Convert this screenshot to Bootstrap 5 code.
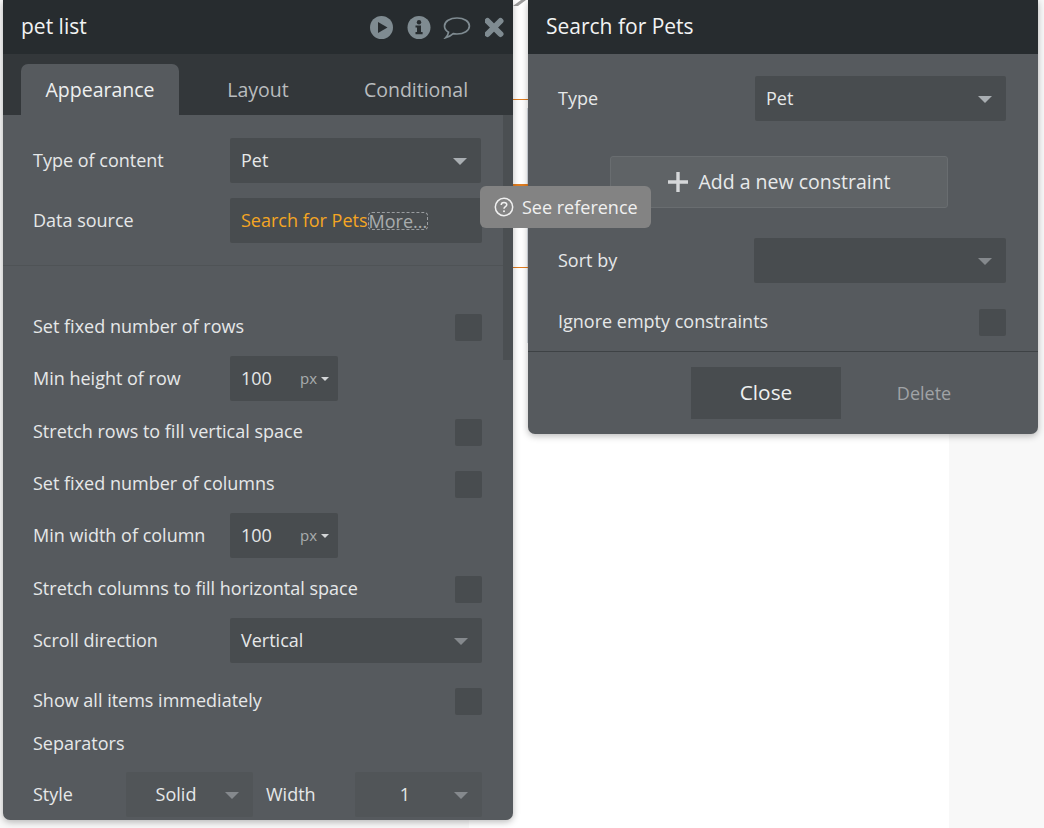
<!DOCTYPE html>
<html lang="en"><head><meta charset="utf-8">
<link href="https://cdn.jsdelivr.net/npm/bootstrap@5.3.0/dist/css/bootstrap.min.css" rel="stylesheet">
<style>
html,body{height:828px;overflow:hidden}
body{background:#f8f8f8;font-family:"Open Sans","Liberation Sans",sans-serif;font-size:18px;color:#e6e8e9;position:relative}
.white-canvas{position:absolute;left:469px;top:0;width:480px;bottom:0;background:#fff}
.wire{position:absolute;left:513px;width:15px;height:1px;background:#e07d20}
.wire-thick{height:2px}
.guide{position:absolute;left:527px;top:108px;width:1px;height:235px;background:#d8dde4}
.corner-mark{position:absolute;left:513px;top:0}
.pane{position:absolute;top:0;width:510px;background:#565a5e;border-radius:0 0 7px 7px;box-shadow:0 2px 7px rgba(0,0,0,.28);overflow:hidden}
.pane-l{left:3px;height:820px}
.pane-r{left:528px;height:434px}
.hd{height:54px;background:#272c2f;color:#f2f3f3;font-size:21px;padding:0 8px 0 18px}
.hd-icons{gap:13px}
.tabs{height:61px;background:#33373a;padding:10px 18px 0}
.tb{height:51px;width:158px;line-height:51px;text-align:center;font-size:19.5px;color:#b9bcbe}
.tb.on{background:#565a5e;color:#eef0f0;border-radius:7px 7px 0 0}
.track{position:absolute;left:500px;top:115px;width:10px;height:245px;background:#4b4f52}
.pbody{padding:0 31px 0 30px}
.pbody-r{padding:0 32px 0 30px}
.line{height:45px}
.line-s{height:27px}
.lift>span{margin-bottom:3px}
.fld{height:45px;background:#484c4f;border-radius:2px;position:relative;padding-left:11px;color:#e6e8e9;flex:none}
.fld-w{width:252px;margin-left:auto}
.fld-t{width:251px}
.fld-t1{width:251px;margin-left:auto;margin-right:1px}
.fld-n{width:108px}
.lbl-n{width:197px}
.fld-soft{width:127px;background:#515558;justify-content:center;padding:0 27px 0 0}
.soft-a{margin-left:auto}
.caret-d{width:0;height:0;border-left:7px solid transparent;border-right:7px solid transparent;border-top:7px solid #a9aeb2;position:absolute;right:14px;top:20px}
.caret-m{border-top-color:#85898d}
.px-unit{position:absolute;right:9px;top:12px;font-size:15px;color:#a9acae;line-height:20px}
.px-unit::after{content:"";display:inline-block;width:0;height:0;border-left:4.5px solid transparent;border-right:4.5px solid transparent;border-top:4.5px solid #d4d6d8;margin-left:4px;vertical-align:3px}
.ck{width:27px;height:27px;background:#484c4f;border-radius:2px;margin-left:auto;flex:none}
.sep{height:1px;background:#4f5356;margin-left:-30px;margin-right:-31px}
.sep-dark{height:1px;background:#3e4245;margin:15px -32px 0 -30px}
.dsrc{color:#f5a623}
.more-tag{color:#a9acae;border:1px dashed #9a9da0;border-radius:4px;line-height:16px;height:18px;width:60px;white-space:nowrap;margin-top:1px}
.add-btn{width:338px;height:52px;margin-left:52px;background:#5f6366;border:1px solid #696d70;border-radius:3px;color:#e8eaeb;font-size:19.5px;padding:0;gap:9px}
.close-btn{width:150px;height:52px;margin-left:133px;background:#484c4f;border:0;border-radius:0;color:#eef0f0;font-size:20.8px;padding:0}
.del-text{width:100px;margin-left:33px;text-align:center;color:#a0a3a6;font-size:18px}
.tip{position:absolute;left:480px;top:186px;width:171px;height:42px;background:#838383;border-radius:6px;color:#f0f0f0;font-size:18px;padding-left:14px;gap:8px;white-space:nowrap}
.mt15{margin-top:15px}.mt16{margin-top:16px}.mt17{margin-top:17px}.mt18{margin-top:18px}.mt22{margin-top:22px}.mt23{margin-top:23px}.mt25{margin-top:25px}.mt26{margin-top:26px}.mt48{margin-top:48px}.mt35{margin-top:35px}.mt30{margin-top:30px}
.sep-title{line-height:24px;margin-bottom:-1px;position:relative;top:-1px}
.lbl-gap{width:93px}
.w-lbl{margin-left:13px;width:89px}
</style></head><body>
<div class="white-canvas"></div>
<div class="guide"></div>
<svg class="corner-mark" width="14" height="6" viewBox="0 0 14 6"><path d="M0 6 L8 0 H13 L5 6Z" fill="#9b9b9b"/></svg>
<div class="wire" style="top:99px"></div><div class="wire wire-thick" style="top:184px"></div><div class="wire" style="top:267px"></div>

<div class="pane pane-l">
 <div class="hd d-flex align-items-center"><span>pet list</span>
  <div class="hd-icons d-flex align-items-center ms-auto">
   <svg width="24" height="24" viewBox="0 0 24 24"><circle cx="11.5" cy="12.5" r="11.5" fill="#7f8b91"/><path d="M8 7 L17.5 12.5 L8 18Z" fill="#272c2f"/></svg>
   <svg width="24" height="24" viewBox="0 0 24 24"><circle cx="12" cy="12.5" r="11.5" fill="#7f8b91"/><circle cx="12" cy="7.2" r="2.2" fill="#272c2f"/><path d="M8.5 10.4 H14 V17 H15.6 V19.2 H8.5 V17 H10 V12.6 H8.5Z" fill="#272c2f"/></svg>
   <svg width="28" height="24" viewBox="0 0 28 24" style="margin-left:-1px"><path d="M14 3 C21 3 26.4 6.5 26.4 11 C26.4 15.5 21 19 14 19 C12.6 19 11.4 18.9 10.2 18.6 C8 20.6 5.6 22 2.6 22.8 C4.2 21 5.2 19.2 5.5 17.3 C3 15.8 1.5 13.6 1.5 11 C1.5 6.5 7 3 14 3Z" fill="none" stroke="#7f8b91" stroke-width="1.7"/></svg>
   <svg width="20" height="24" viewBox="0 0 20 24" style="margin-left:1px"><path d="M2.5 6 L15.5 19 M15.5 6 L2.5 19" stroke="#7f8b91" stroke-width="6" stroke-linecap="round" fill="none"/></svg>
  </div>
 </div>
 <div class="tabs d-flex"><div class="tb on">Appearance</div><div class="tb">Layout</div><div class="tb">Conditional</div></div>
 <div class="track"></div>
 <div class="pbody">
  <div class="line d-flex align-items-center mt23"><span>Type of content</span><div class="fld fld-t1 d-flex align-items-center">Pet<i class="caret-d"></i></div></div>
  <div class="line d-flex align-items-center mt15"><span>Data source</span><div class="fld fld-w d-flex align-items-center"><span class="dsrc">Search for Pets</span><span class="more-tag">More...</span></div></div>
  <div class="sep mt22"></div>
  <div class="line-s lift d-flex align-items-center mt48"><span>Set fixed number of rows</span><div class="ck"></div></div>
  <div class="line d-flex align-items-center mt15"><span class="lbl-n">Min height of row</span><div class="fld fld-n d-flex align-items-center">100<span class="px-unit">px</span></div></div>
  <div class="line-s lift d-flex align-items-center mt18"><span>Stretch rows to fill vertical space</span><div class="ck"></div></div>
  <div class="line-s lift d-flex align-items-center mt25"><span>Set fixed number of columns</span><div class="ck"></div></div>
  <div class="line d-flex align-items-center mt15"><span class="lbl-n">Min width of column</span><div class="fld fld-n d-flex align-items-center">100<span class="px-unit">px</span></div></div>
  <div class="line-s lift d-flex align-items-center mt18"><span>Stretch columns to fill horizontal space</span><div class="ck"></div></div>
  <div class="line d-flex align-items-center mt15"><span>Scroll direction</span><div class="fld fld-w d-flex align-items-center">Vertical<i class="caret-d caret-m"></i></div></div>
  <div class="line-s lift d-flex align-items-center mt25"><span>Show all items immediately</span><div class="ck"></div></div>
  <div class="sep-title mt17">Separators</div>
  <div class="line d-flex align-items-center mt17"><span class="lbl-gap">Style</span><div class="fld fld-soft d-flex align-items-center">Solid<i class="caret-d caret-m"></i></div><span class="w-lbl">Width</span><div class="fld fld-soft d-flex align-items-center soft-a">1<i class="caret-d caret-m"></i></div></div>
 </div>
</div>

<div class="pane pane-r">
 <div class="hd d-flex align-items-center">Search for Pets</div>
 <div class="pbody-r">
  <div class="line d-flex align-items-center mt22"><span>Type</span><div class="fld fld-t d-flex align-items-center ms-auto">Pet<i class="caret-d"></i></div></div>
  <button class="btn add-btn d-flex align-items-center justify-content-center mt35"><svg width="22" height="22" viewBox="0 0 22 22"><path d="M11 1 V21 M1 11 H21" stroke="#d5d7d9" stroke-width="3.4"/></svg>Add a new constraint</button>
  <div class="line d-flex align-items-center mt30"><span>Sort by</span><div class="fld fld-w d-flex align-items-center"><i class="caret-d caret-m"></i></div></div>
  <div class="line-s lift d-flex align-items-center mt26"><span>Ignore empty constraints</span><div class="ck"></div></div>
  <div class="sep-dark"></div>
  <div class="d-flex align-items-center mt15"><button class="btn close-btn">Close</button><span class="del-text">Delete</span></div>
 </div>
</div>

<div class="tip d-flex align-items-center"><svg width="20" height="20" viewBox="0 0 20 20"><circle cx="10" cy="10" r="8.7" fill="none" stroke="#f0f0f0" stroke-width="1.5"/><path d="M7.2 8 C7.2 6.2 8.5 5.4 10 5.4 C11.6 5.4 12.8 6.3 12.8 7.8 C12.8 9.6 10 9.6 10 11.7" fill="none" stroke="#f0f0f0" stroke-width="1.5"/><circle cx="10" cy="14.2" r="1" fill="#f0f0f0"/></svg><span>See reference</span></div>
</body></html>
